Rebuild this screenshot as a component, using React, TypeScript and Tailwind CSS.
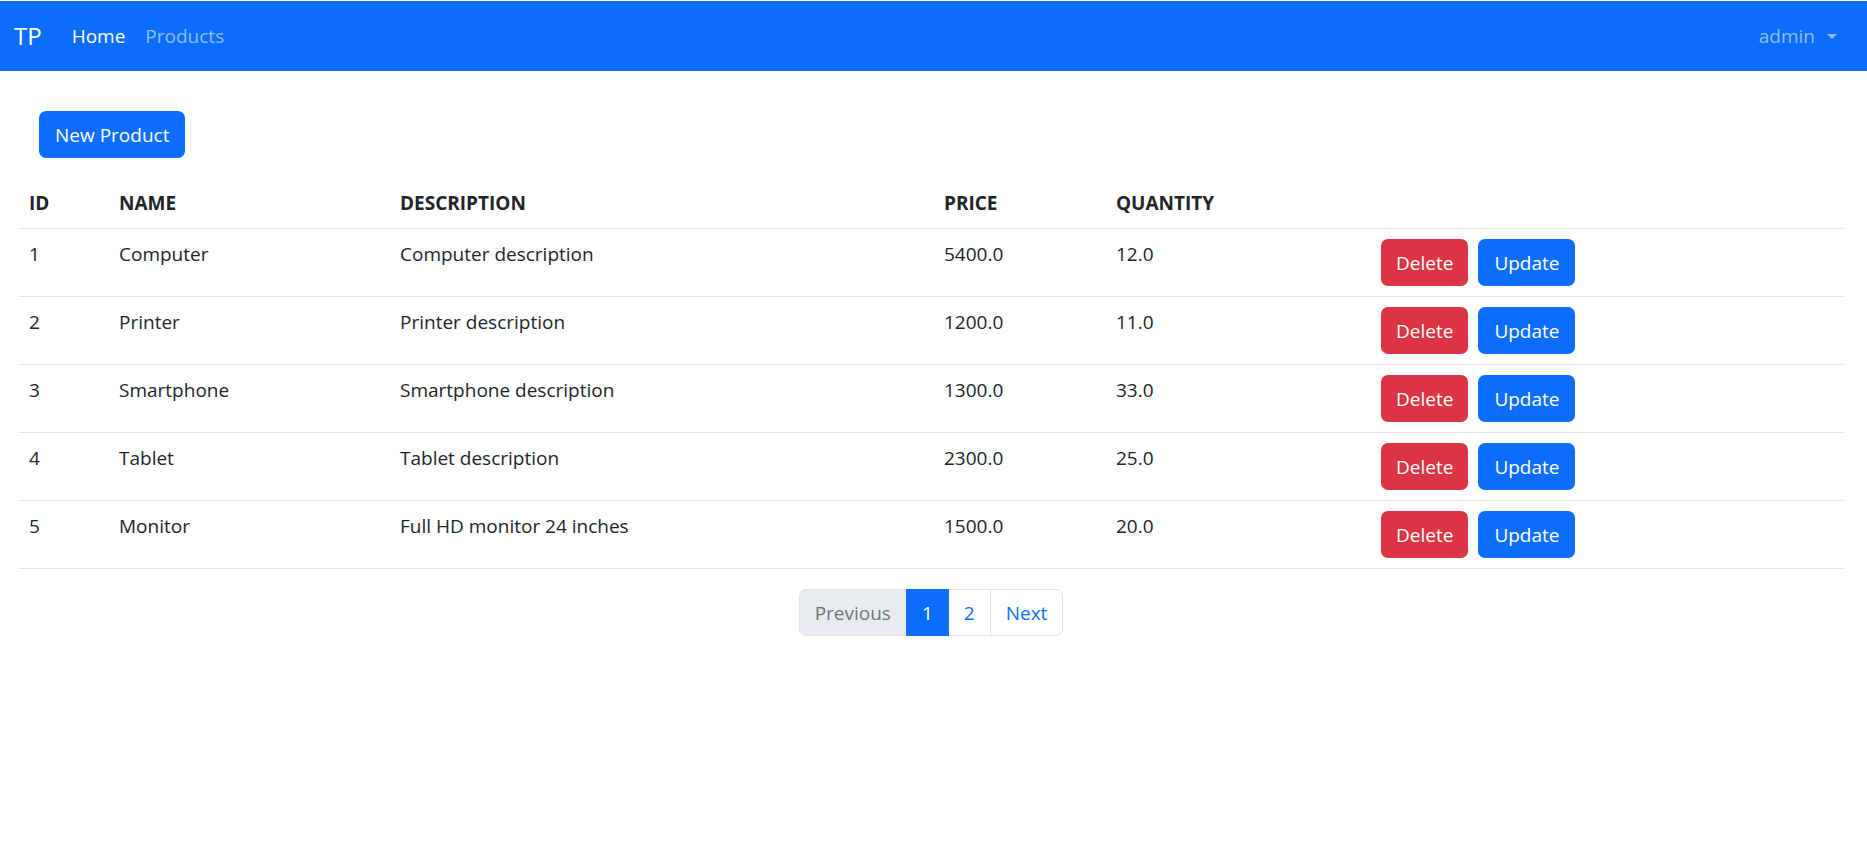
import React from "react";

interface Product {
  id: number
  name: string
  description: string
  price: string
  quantity: string
}

const products: Product[] = [
  { id: 1, name: "Computer", description: "Computer description", price: "5400.0", quantity: "12.0" },
  { id: 2, name: "Printer", description: "Printer description", price: "1200.0", quantity: "11.0" },
  { id: 3, name: "Smartphone", description: "Smartphone description", price: "1300.0", quantity: "33.0" },
  { id: 4, name: "Tablet", description: "Tablet description", price: "2300.0", quantity: "25.0" },
  { id: 5, name: "Monitor", description: "Full HD monitor 24 inches", price: "1500.0", quantity: "20.0" },
]

const Navbar: React.FC = () => {
  return (
    <nav className="mt-px h-[70px] bg-[#0d6efd] flex items-center justify-between pl-[14px] pr-[30px]">
      <div className="flex items-center">
        <span className="text-[24px] leading-[36px] text-white mr-[20px]">TP</span>
        <a className="px-[10px] text-[19px] leading-[30px] text-white">Home</a>
        <a className="px-[10px] text-[19px] leading-[30px] text-[#92befe]">Products</a>
      </div>
      <div className="flex items-center text-[19px] leading-[30px] text-[#92befe]">
        <span>admin</span>
        <svg className="ml-[12px]" width="10" height="5" viewBox="0 0 10 5">
          <path d="M0 0 L10 0 L5 5 Z" fill="#92befe" />
        </svg>
      </div>
    </nav>
  )
}

const Pagination: React.FC = () => {
  return (
    <div className="flex justify-center mt-[20px]">
      <div className="flex h-[47px] text-[19px] leading-[30px]">
        <span className="flex items-center px-[15px] bg-[#e9ecef] text-[#6c757d] border border-[#dee2e6] rounded-l-[7px]">
          Previous
        </span>
        <span className="flex items-center px-[15px] bg-[#0d6efd] text-white border border-[#0d6efd] -ml-px z-10">
          1
        </span>
        <span className="flex items-center px-[15px] bg-white text-[#0d6efd] border border-[#dee2e6] -ml-px">
          2
        </span>
        <span className="flex items-center px-[15px] bg-white text-[#0d6efd] border border-[#dee2e6] -ml-px rounded-r-[7px]">
          Next
        </span>
      </div>
    </div>
  )
}

export default function App() {
  return (
    <div className="min-h-screen bg-white text-[#212529] font-['Open_Sans',sans-serif]">
      <Navbar />

      <div className="pl-[19px] pr-[24px]">
        {/* New product button */}
        <button className="ml-[20px] mt-[40px] h-[47px] px-[16px] rounded-[7px] bg-[#0d6efd] text-white text-[19px] leading-[30px]">
          New Product
        </button>

        {/* Products table */}
        <table className="mt-[20px] w-full table-fixed border-collapse text-[19px] leading-[30px]">
          <colgroup>
            <col className="w-[90px]" />
            <col className="w-[281px]" />
            <col className="w-[544px]" />
            <col className="w-[172px]" />
            <col className="w-[265px]" />
            <col />
          </colgroup>
          <thead>
            <tr>
              <th className="text-left font-bold p-[10px] border-b border-[#dee2e6]">ID</th>
              <th className="text-left font-bold p-[10px] border-b border-[#dee2e6]">NAME</th>
              <th className="text-left font-bold p-[10px] border-b border-[#dee2e6]">DESCRIPTION</th>
              <th className="text-left font-bold p-[10px] border-b border-[#dee2e6]">PRICE</th>
              <th className="text-left font-bold p-[10px] border-b border-[#dee2e6]">QUANTITY</th>
              <th className="p-[10px] border-b border-[#dee2e6]"></th>
            </tr>
          </thead>
          <tbody>
            {products.map((p) => (
              <tr key={p.id}>
                <td className="align-top p-[10px] border-b border-[#dee2e6]">{p.id}</td>
                <td className="align-top p-[10px] border-b border-[#dee2e6]">{p.name}</td>
                <td className="align-top p-[10px] border-b border-[#dee2e6]">{p.description}</td>
                <td className="align-top p-[10px] border-b border-[#dee2e6]">{p.price}</td>
                <td className="align-top p-[10px] border-b border-[#dee2e6]">{p.quantity}</td>
                <td className="align-top p-[10px] border-b border-[#dee2e6]">
                  <div className="flex gap-[10px]">
                    <button className="h-[47px] px-[15px] rounded-[7px] bg-[#dc3545] text-white">Delete</button>
                    <button className="h-[47px] px-[16px] rounded-[7px] bg-[#0d6efd] text-white">Update</button>
                  </div>
                </td>
              </tr>
            ))}
          </tbody>
        </table>

        <Pagination />
      </div>
    </div>
  )
}
